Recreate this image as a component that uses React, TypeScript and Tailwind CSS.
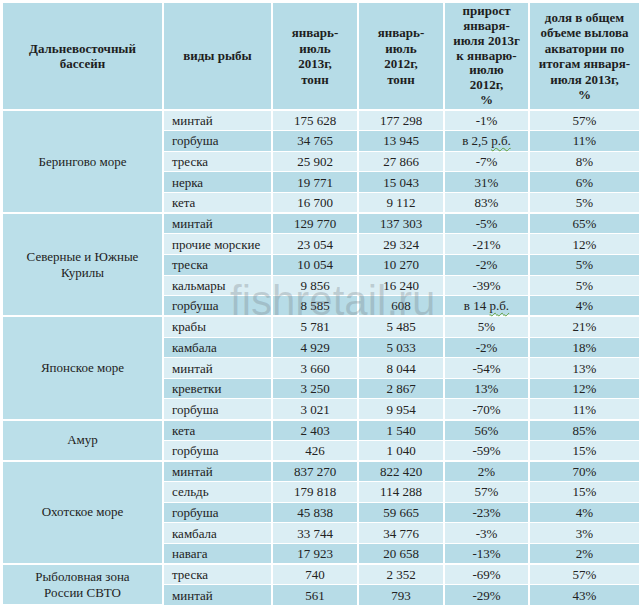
import React from "react";

type Group = { name: string[]; rows: string[][] };

const groups: Group[] = [
  {
    name: ["Берингово море"],
    rows: [
      ["минтай", "175 628", "177 298", "-1%", "57%"],
      ["горбуша", "34 765", "13 945", "в 2,5 р.б.", "11%"],
      ["треска", "25 902", "27 866", "-7%", "8%"],
      ["нерка", "19 771", "15 043", "31%", "6%"],
      ["кета", "16 700", "9 112", "83%", "5%"],
    ],
  },
  {
    name: ["Северные и Южные", "Курилы"],
    rows: [
      ["минтай", "129 770", "137 303", "-5%", "65%"],
      ["прочие морские", "23 054", "29 324", "-21%", "12%"],
      ["треска", "10 054", "10 270", "-2%", "5%"],
      ["кальмары", "9 856", "16 240", "-39%", "5%"],
      ["горбуша", "8 585", "608", "в 14 р.б.", "4%"],
    ],
  },
  {
    name: ["Японское море"],
    rows: [
      ["крабы", "5 781", "5 485", "5%", "21%"],
      ["камбала", "4 929", "5 033", "-2%", "18%"],
      ["минтай", "3 660", "8 044", "-54%", "13%"],
      ["креветки", "3 250", "2 867", "13%", "12%"],
      ["горбуша", "3 021", "9 954", "-70%", "11%"],
    ],
  },
  {
    name: ["Амур"],
    rows: [
      ["кета", "2 403", "1 540", "56%", "85%"],
      ["горбуша", "426", "1 040", "-59%", "15%"],
    ],
  },
  {
    name: ["Охотское море"],
    rows: [
      ["минтай", "837 270", "822 420", "2%", "70%"],
      ["сельдь", "179 818", "114 288", "57%", "15%"],
      ["горбуша", "45 838", "59 665", "-23%", "4%"],
      ["камбала", "33 744", "34 776", "-3%", "3%"],
      ["навага", "17 923", "20 658", "-13%", "2%"],
    ],
  },
  {
    name: ["Рыболовная зона", "России СВТО"],
    rows: [
      ["треска", "740", "2 352", "-69%", "57%"],
      ["минтай", "561", "793", "-29%", "43%"],
    ],
  },
];

function Growth({ v }: { v: string }) {
  const m = v.match(/^(в [\d,]+ )(р\.б\.)$/);
  if (m) {
    return (
      <>
        {m[1]}
        <span className="underline decoration-wavy decoration-[#5f9f3a] decoration-1 underline-offset-2">
          {m[2]}
        </span>
      </>
    );
  }
  return <>{v}</>;
}

export default function App() {
  let idx = 0;
  const headerBase =
    "border-2 border-white bg-[#b6dce7] text-center align-middle font-bold text-[13px] text-[#1e1e1e]";
  const headerCell = headerBase + " leading-[15.5px]";
  return (
    <div
      className="relative w-[640px] h-[606px] bg-white overflow-hidden"
      style={{ fontFamily: '"Liberation Serif", "Times New Roman", serif' }}
    >
      <table className="table-fixed border-collapse w-[638px] ml-[1px] mt-[1px]">
        <colgroup>
          <col className="w-[161px]" />
          <col className="w-[109px]" />
          <col className="w-[86px]" />
          <col className="w-[86px]" />
          <col className="w-[85px]" />
          <col className="w-[111px]" />
        </colgroup>
        <thead>
          <tr className="h-[108px]">
            <th className={headerCell}>
              Дальневосточный
              <br />
              бассейн
            </th>
            <th className={headerCell}>виды рыбы</th>
            <th className={headerCell}>
              январь-
              <br />
              июль
              <br />
              2013г,
              <br />
              тонн
            </th>
            <th className={headerCell}>
              январь-
              <br />
              июль
              <br />
              2012г,
              <br />
              тонн
            </th>
            <th className={headerBase + " leading-[14.8px]"}>
              прирост
              <br />
              января-
              <br />
              июля 2013г
              <br />к январю-
              <br />
              июлю
              <br />
              2012г,
              <br />%
            </th>
            <th className={headerCell}>
              доля в общем
              <br />
              объеме вылова
              <br />
              акватории по
              <br />
              итогам января-
              <br />
              июля 2013г,
              <br />%
            </th>
          </tr>
        </thead>
        <tbody className="text-[13px] leading-[15px] text-[#222]">
          {groups.map((g, gi) =>
            g.rows.map((r, ri) => {
              const i = idx++;
              const bg = i % 2 === 0 ? "bg-[#dbeef4]" : "bg-[#b7dce7]";
              const rowBorder = ri === 0 ? "border-t-2" : "border-t";
              return (
                <tr key={`${gi}-${ri}`} className="h-[20.65px]">
                  {ri === 0 && (
                    <td
                      rowSpan={g.rows.length}
                      className="border-2 border-white bg-[#bbdfe9] text-center align-middle leading-[16px]"
                    >
                      {g.name.map((n, k) => (
                        <div key={k}>{n}</div>
                      ))}
                    </td>
                  )}
                  <td
                    className={`${bg} border-x-2 ${rowBorder} border-white pl-[8px] whitespace-nowrap py-0`}
                  >
                    {r[0]}
                  </td>
                  <td className={`${bg} border-x-2 ${rowBorder} border-white text-center py-0`}>
                    {r[1]}
                  </td>
                  <td className={`${bg} border-x-2 ${rowBorder} border-white text-center py-0`}>
                    {r[2]}
                  </td>
                  <td className={`${bg} border-x-2 ${rowBorder} border-white text-center py-0 whitespace-nowrap`}>
                    <Growth v={r[3]} />
                  </td>
                  <td className={`${bg} border-x-2 ${rowBorder} border-white text-center py-0`}>
                    {r[4]}
                  </td>
                </tr>
              );
            })
          )}
        </tbody>
      </table>
      <div
        className="pointer-events-none absolute left-[230px] top-[276px] text-[42px] leading-[50px] text-[rgba(110,120,125,0.28)]"
        style={{ fontFamily: '"Liberation Sans", Arial, sans-serif' }}
      >
        fishretail.ru
      </div>
    </div>
  );
}
